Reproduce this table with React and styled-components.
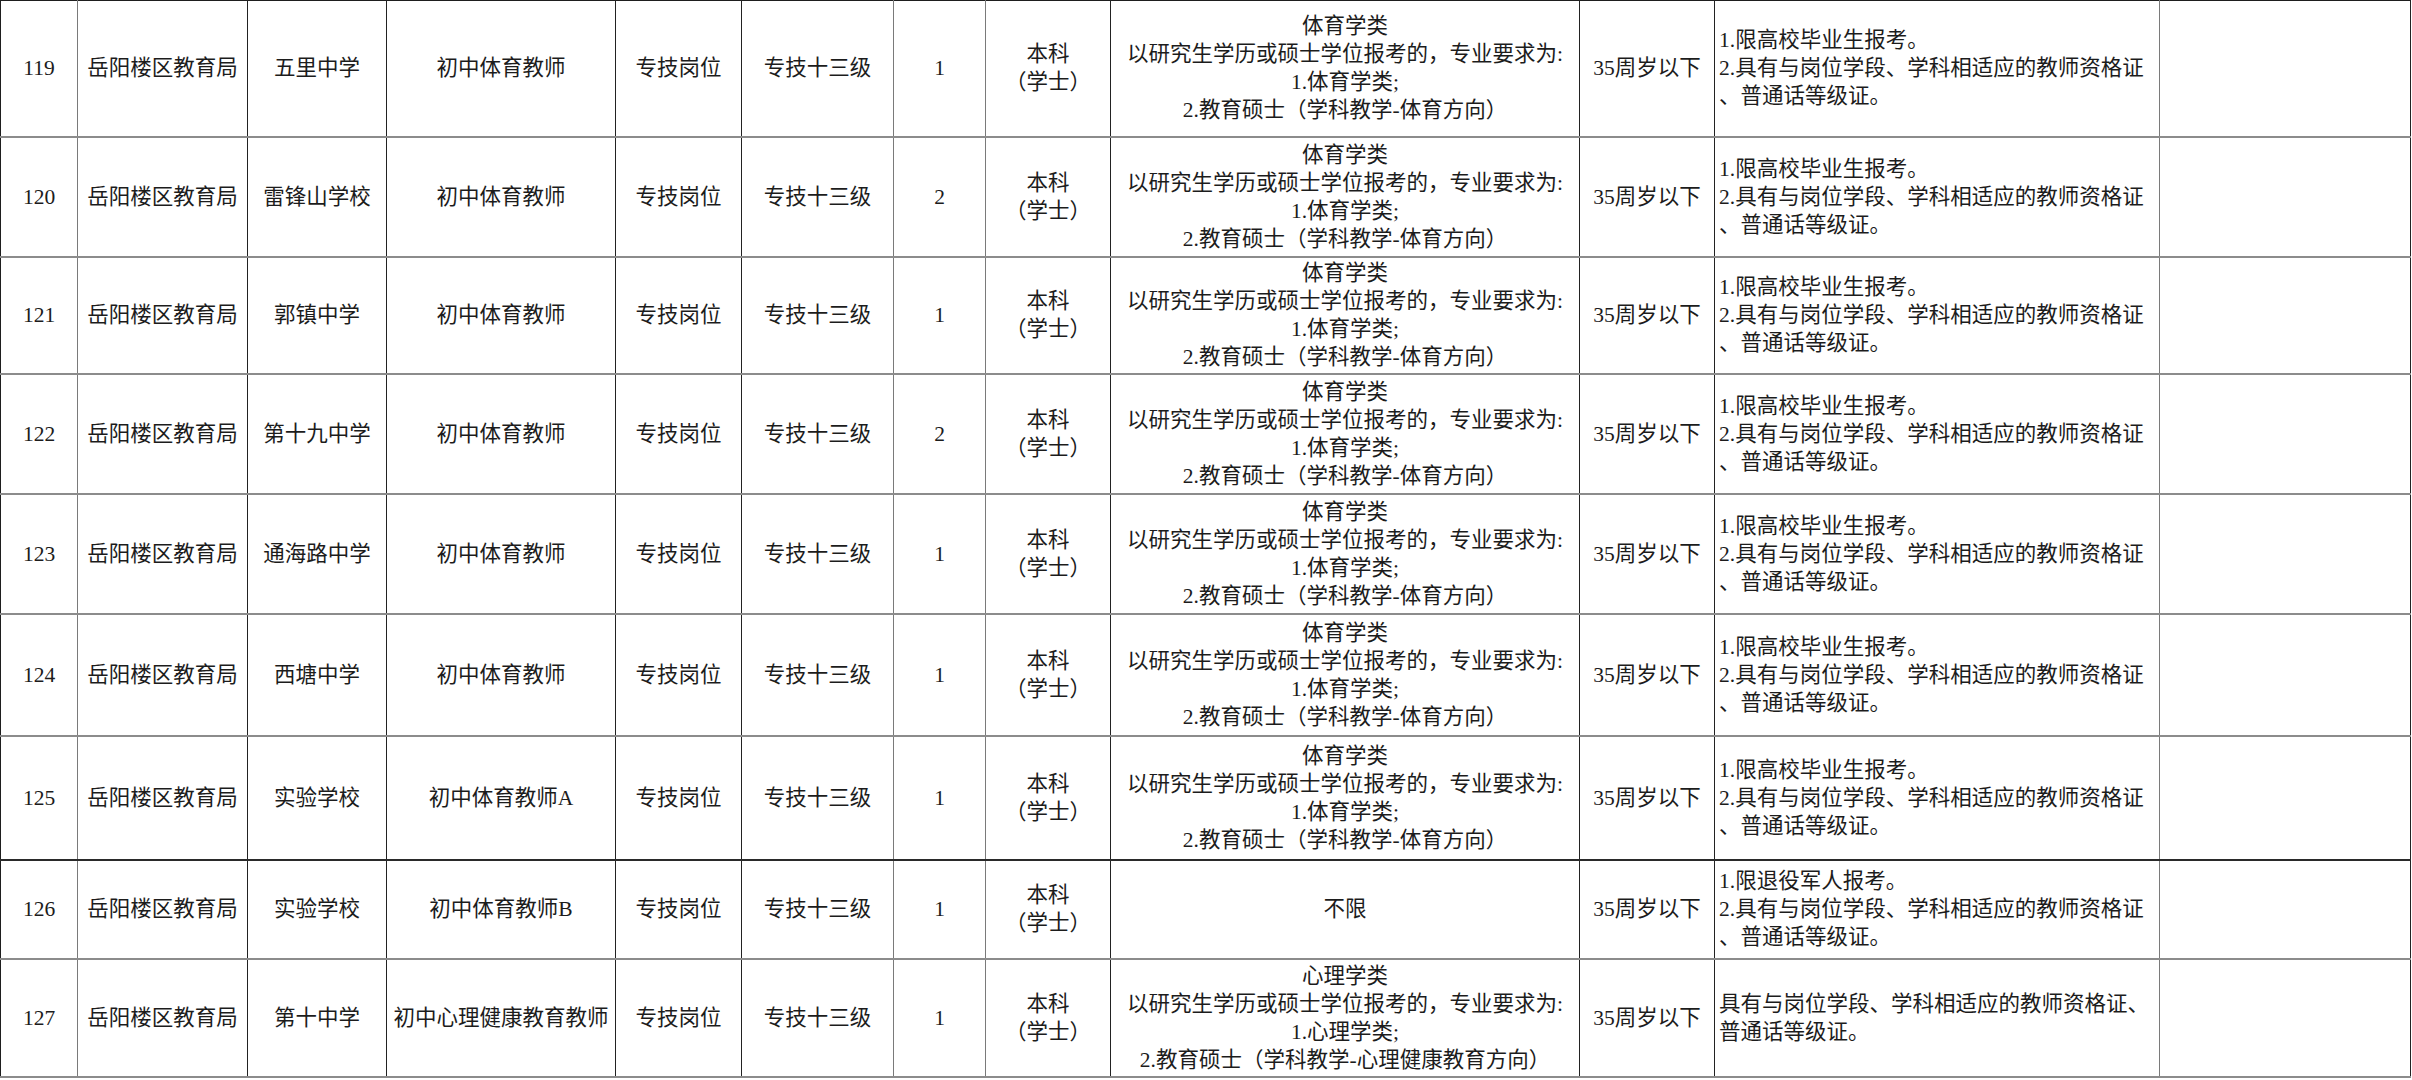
import React from 'react';
import styled, { createGlobalStyle } from 'styled-components';

const GlobalStyle = createGlobalStyle`
  html, body {
    margin: 0;
    padding: 0;
    background: #fff;
  }
  body {
    font-family: "Liberation Serif", "Noto Sans CJK SC", serif;
    color: #1c1c1c;
  }
`;

// column widths in px, left to right
const COLS = [77, 170, 139, 229, 126, 152, 92, 125, 469, 135, 445, 251];
// columns whose right rule renders grey in the source
const LIGHT_RULES = [0, 5, 6, 10];

const Sheet = styled.table`
  border-collapse: collapse;
  table-layout: fixed;
  width: 2411px;
  border-top: 1.5px solid #1e1e1e;
  border-left: 1.5px solid #1e1e1e;
  font-size: 21.5px;
  line-height: 28px;
`;

const Row = styled.tr`
  height: ${(p) => p.$h}px;
  & > td {
    border-bottom: 2px solid ${(p) => (p.$dark ? '#2a2a2a' : '#8c8c8c')};
  }
`;

const Cell = styled.td`
  padding: 0 ${(p) => (p.$left ? '4px' : '2px')};
  text-align: ${(p) => (p.$left ? 'left' : 'center')};
  vertical-align: middle;
  white-space: nowrap;
  overflow: hidden;
  border-right: 1.5px solid ${(p) => (p.$light ? '#7a7a7a' : '#222')};
`;

const Line = styled.div`
  display: block;
`;

const sportMajor = [
  '体育学类',
  '以研究生学历或硕士学位报考的，专业要求为:',
  '1.体育学类;',
  '2.教育硕士（学科教学-体育方向）',
];

const psyMajor = [
  '心理学类',
  '以研究生学历或硕士学位报考的，专业要求为:',
  '1.心理学类;',
  '2.教育硕士（学科教学-心理健康教育方向）',
];

const grads = [
  '1.限高校毕业生报考。',
  '2.具有与岗位学段、学科相适应的教师资格证',
  '、普通话等级证。',
];

const rows = [
  { no: '119', school: '五里中学', title: '初中体育教师', n: '1', major: sportMajor, req: grads, h: 136 },
  { no: '120', school: '雷锋山学校', title: '初中体育教师', n: '2', major: sportMajor, req: grads, h: 120 },
  { no: '121', school: '郭镇中学', title: '初中体育教师', n: '1', major: sportMajor, req: grads, h: 117 },
  { no: '122', school: '第十九中学', title: '初中体育教师', n: '2', major: sportMajor, req: grads, h: 120 },
  { no: '123', school: '通海路中学', title: '初中体育教师', n: '1', major: sportMajor, req: grads, h: 120 },
  { no: '124', school: '西塘中学', title: '初中体育教师', n: '1', major: sportMajor, req: grads, h: 122 },
  { no: '125', school: '实验学校', title: '初中体育教师A', n: '1', major: sportMajor, req: grads, h: 124, dark: true },
  {
    no: '126',
    school: '实验学校',
    title: '初中体育教师B',
    n: '1',
    major: ['不限'],
    req: ['1.限退役军人报考。', '2.具有与岗位学段、学科相适应的教师资格证', '、普通话等级证。'],
    h: 99,
  },
  {
    no: '127',
    school: '第十中学',
    title: '初中心理健康教育教师',
    n: '1',
    major: psyMajor,
    req: ['具有与岗位学段、学科相适应的教师资格证、', '普通话等级证。'],
    h: 118,
  },
];

const Lines = ({ items }) => items.map((t, i) => <Line key={i}>{t}</Line>);

export default function App() {
  return (
    <>
      <GlobalStyle />
      <Sheet>
        <colgroup>
          {COLS.map((w, i) => (
            <col key={i} style={{ width: w }} />
          ))}
        </colgroup>
        <tbody>
          {rows.map((r) => {
            const cells = [
              r.no,
              '岳阳楼区教育局',
              r.school,
              r.title,
              '专技岗位',
              '专技十三级',
              r.n,
              <Lines items={['本科', '（学士）']} />,
              <Lines items={r.major} />,
              '35周岁以下',
              <Lines items={r.req} />,
              '',
            ];
            return (
              <Row key={r.no} $h={r.h} $dark={r.dark}>
                {cells.map((c, i) => (
                  <Cell key={i} $left={i === 10} $light={LIGHT_RULES.includes(i)}>
                    {c}
                  </Cell>
                ))}
              </Row>
            );
          })}
        </tbody>
      </Sheet>
    </>
  );
}
